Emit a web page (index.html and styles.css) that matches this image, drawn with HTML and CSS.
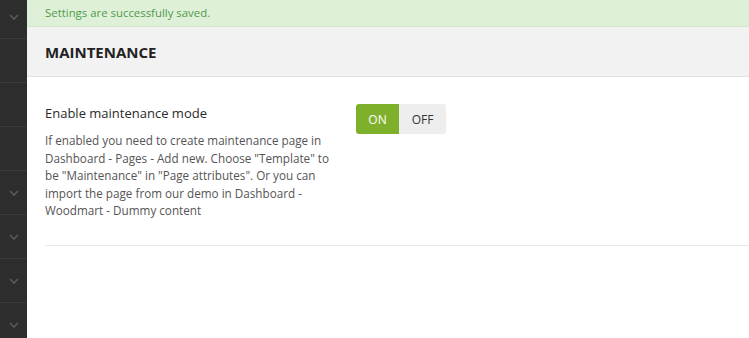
FILE: index.html
```html
<!DOCTYPE html>
<html>
<head>
<meta charset="utf-8">
<link rel="stylesheet" href="styles.css">
</head>
<body>
<div class="layout">
  <aside class="sidebar">
    <ul class="menu">
      <li class="menu-item"><span class="chev"><svg width="10" height="6" viewBox="0 0 10 6"><path d="M1 1l4 4 4-4" fill="none" stroke="#5a5a5a" stroke-width="1.6"/></svg></span></li>
      <li class="menu-item"></li>
      <li class="menu-item"></li>
      <li class="menu-item"></li>
      <li class="menu-item"><span class="chev"><svg width="10" height="6" viewBox="0 0 10 6"><path d="M1 1l4 4 4-4" fill="none" stroke="#5a5a5a" stroke-width="1.6"/></svg></span></li>
      <li class="menu-item"><span class="chev"><svg width="10" height="6" viewBox="0 0 10 6"><path d="M1 1l4 4 4-4" fill="none" stroke="#5a5a5a" stroke-width="1.6"/></svg></span></li>
      <li class="menu-item"><span class="chev"><svg width="10" height="6" viewBox="0 0 10 6"><path d="M1 1l4 4 4-4" fill="none" stroke="#5a5a5a" stroke-width="1.6"/></svg></span></li>
      <li class="menu-item"><span class="chev"><svg width="10" height="6" viewBox="0 0 10 6"><path d="M1 1l4 4 4-4" fill="none" stroke="#5a5a5a" stroke-width="1.6"/></svg></span></li>
    </ul>
  </aside>
  <main class="main">
    <div class="notice">Settings are successfully saved.</div>
    <div class="section-head"><h2 class="section-title">MAINTENANCE</h2></div>
    <div class="section-body">
      <div class="field">
        <div class="field-desc">
          <div class="field-title">Enable maintenance mode</div>
          <p class="field-text">If enabled you need to create maintenance page in Dashboard - Pages - Add new. Choose "Template" to be "Maintenance" in "Page attributes". Or you can import the page from our demo in Dashboard - Woodmart - Dummy content</p>
        </div>
        <div class="switch">
          <span class="switch-opt switch-on">ON</span>
          <span class="switch-opt switch-off">OFF</span>
        </div>
      </div>
    </div>
  </main>
</div>
</body>
</html>
```
FILE: styles.css
```css
html, body {
  margin: 0;
  padding: 0;
  background: #ffffff;
  font-family: "Open Sans", "Noto Sans", sans-serif;
  height: 100%;
}
.layout {
  display: flex;
  height: 338px;
  overflow: hidden;
}
.sidebar {
  width: 27px;
  flex: none;
  background: #2d2d2d;
  overflow: hidden;
}
.menu {
  list-style: none;
  margin: -5px 0 0 0;
  padding: 0;
}
.menu-item {
  height: 43px;
  border-bottom: 1px solid #3b3b3b;
  display: flex;
  align-items: center;
  justify-content: center;
}
.chev {
  display: flex;
  margin-left: 1px;
}
.main {
  flex: 1;
  min-width: 0;
}
.notice {
  height: 27px;
  background: #dff0d8;
  border-bottom: 1px solid #d3e6cc;
  color: #4f9a4a;
  font-size: 11.4px;
  line-height: 25px;
  padding-left: 18px;
  box-sizing: border-box;
}
.section-head {
  height: 50px;
  background: #f2f2f2;
  border-bottom: 1px solid #e2e2e2;
  display: flex;
  align-items: center;
  padding-left: 18px;
  box-sizing: border-box;
}
.section-title {
  margin: 0;
  font-size: 15px;
  font-weight: 700;
  color: #222;
}
.section-body {
  padding: 0 0 0 18px;
}
.field {
  display: flex;
  align-items: flex-start;
  padding: 27px 0 25px;
  border-bottom: 1px solid #e8e8e8;
}
.field-desc {
  width: 300px;
  margin-right: 11px;
}
.field-title {
  font-size: 13px;
  color: #2a2a2a;
  line-height: 18px;
  margin-bottom: 10px;
}
.field-text {
  margin: 0;
  font-size: 11.7px;
  line-height: 17.5px;
  color: #555;
}
.switch {
  display: flex;
  border-radius: 3px;
  overflow: hidden;
  height: 30px;
}
.switch-opt {
  display: flex;
  align-items: center;
  justify-content: center;
  font-size: 12px;
  font-weight: 400;
}
.switch-on {
  width: 43px;
  background: #7fb02b;
  color: #fff;
}
.switch-off {
  width: 47px;
  background: #eeeeee;
  color: #333;
}
```
